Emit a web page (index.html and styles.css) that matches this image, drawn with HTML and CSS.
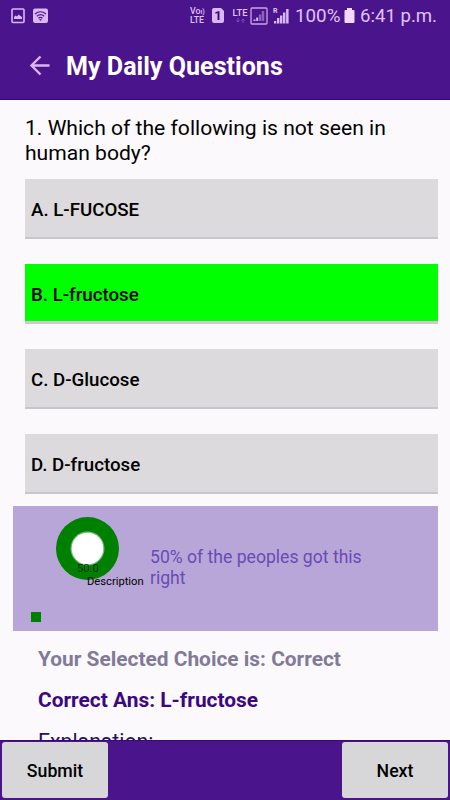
FILE: index.html
```
<!DOCTYPE html>
<html lang="en">
<head>
	<meta charset="UTF-8">
	<meta name="viewport" content="width=device-width,initial-scale=1.0">
	<title>My Daily Questions</title>
	<link rel="stylesheet" href="styles.css">
</head>
<body>
	<div class="wrap">
		<header class="header">
			<div class="status-bar">
				<svg class="icon-picture" width="14" height="16" viewBox="0 0 14 16">
					<rect x="1" y="1" width="12" height="13.5" rx="1" fill="none" stroke="#d9b8f5" stroke-width="1.6"/>
					<path d="M3 11V9l1.5-1.5L6 8.5 7.5 6.500 9.500 8 11 9v2z" fill="#d9b8f5"/>
				</svg>
				<svg class="icon-wifi" width="15" height="16" viewBox="0 0 15 16">
					<rect y="0.5" width="15" height="14.5" rx="2" fill="#d9b8f5"/>
					<path d="M2 6Q7.5 1.5 13 6M3.8 8.2Q7.5 5 11.2 8.2M5.5 10.2Q7.5 8.5 9.5 10.2" fill="none" stroke="#4a148c" stroke-width="1.2"/>
					<path d="M6 11.2h3L7.5 13z" fill="#4a148c"/>
				</svg>
				<div class="volte"><span>Vo<i>ı)</i></span><span>LTE</span></div>
				<div class="sim">1</div>
				<div class="lte">
					<span>LTE</span>
					<svg width="9" height="5" viewBox="0 0 9 5"><path d="M2 0v4M.5 2.5L2 4l1.500-1.500M7 5V1M5.500 2.500L7 1l1.500 1.500" fill="none" stroke="#8053b5"/></svg>
				</div>
				<svg class="icon-signal" width="18" height="18" viewBox="0 0 18 18">
					<rect x="1" y="1" width="16" height="16" rx="1" fill="none" stroke="#c9a5e9" stroke-width="1.3"/>
					<path d="M3.5 12.5h2V14h-2zM6.200 10.500h2V14h-2z" fill="#d9b8f5"/>
					<path d="M8.9 7.5h2.300V14H8.900zM11.700 4h2.500v10h-2.500z" fill="#8d60bd"/>
				</svg>
				<div class="roaming">
					<span>R</span>
					<svg width="15" height="16" viewBox="0 0 15 16"><path d="M0 13h2.300v2.500H0zM3 10h2.400v5.500H3zM6 7.500h2.400v8H6zM9 4.500h2.400v11H9zM12.100 1H14.600v14.500h-2.500z" fill="#d9b8f5"/></svg>
				</div>
				<span class="percent">100%</span>
				<svg class="icon-battery" width="11" height="15" viewBox="0 0 11 15"><path d="M3 0h5v2h1.500q1 0 1 1v11q0 1-1 1h-8q-1 0-1-1V3q0-1 1-1H3z" fill="#f2d9ff"/></svg>
				<span class="time">6:41 p.m.</span>
			</div>
			<div class="toolbar">
				<svg class="icon-back" width="22" height="22" viewBox="0 0 22 22">
					<path d="M20.5 10.5H2.5M11.5 1.5L2.5 10.5 11.5 19.5" fill="none" stroke="#dcb5f7" stroke-width="2.4"/>
				</svg>
				<h1 class="title">My Daily Questions</h1>
			</div>
		</header>
		<main class="content">
			<p class="question">1. Which of the following is not seen in<br>human body?</p>
			<div class="options">
				<button class="option">A. L-FUCOSE</button>
				<button class="option correct">B. L-fructose</button>
				<button class="option">C. D-Glucose</button>
				<button class="option">D. D-fructose</button>
			</div>
			<div class="stats">
				<div class="chart">
					<svg width="63" height="63" viewBox="0 0 63 63">
						<circle cx="31.5" cy="31.5" r="31.5" fill="#008000"/>
						<circle cx="31.5" cy="31.5" r="17" fill="#78b878"/>
						<circle cx="31.5" cy="31.5" r="15.8" fill="#fff"/>
					</svg>
					<span class="chart-value">50.0</span>
					<span class="chart-desc">Description</span>
					<i class="legend"></i>
				</div>
				<p class="stats-text">50% of the peoples got this<br>right</p>
			</div>
			<div class="result">
				<p class="choice">Your Selected Choice is: Correct</p>
				<p class="answer">Correct Ans: L-fructose</p>
				<p class="explanation">Explanation:</p>
			</div>
		</main>
		<footer class="footer">
			<button class="btn">Submit</button>
			<button class="btn">Next</button>
		</footer>
	</div>
</body>
</html>
```
FILE: styles.css
```
* {
	box-sizing: border-box;
}
body {
	margin: 0;
	font-family: Roboto, "Liberation Sans", sans-serif;
	background: #fcf9fd;
	color: #000;
}
p, h1 {
	margin: 0;
}
button {
	border: 0;
	font-family: inherit;
	color: #000;
}
.wrap {
	display: flex;
	flex-direction: column;
	width: 450px;
	height: 800px;
	overflow: hidden;
}
.header {
	flex: none;
	height: 100px;
	background: #4a148c;
	border-bottom: 1px solid #3c0878;
}
.status-bar {
	display: flex;
	align-items: center;
	height: 31px;
	padding-left: 11px;
	color: #e0c2f7;
	white-space: nowrap;
}
.status-bar svg {
	flex: none;
}
.icon-wifi {
	margin-left: 8px;
}
.volte {
	display: flex;
	flex-direction: column;
	flex: none;
	width: 16px;
	margin-left: 142px;
	font-size: 8.8px;
	line-height: 8px;
	font-weight: 500;
}
.volte i {
	font-style: normal;
	font-size: 7px;
}
.sim {
	flex: none;
	width: 12px;
	height: 15px;
	margin-left: 6px;
	border-radius: 2px;
	background: #d9b8f5;
	color: #3c0878;
	font-size: 13px;
	line-height: 15px;
	font-weight: 700;
	text-align: center;
	clip-path: polygon(0 0, 9px 0, 100% 3px, 100% 100%, 0 100%);
}
.lte {
	display: flex;
	flex-direction: column;
	flex: none;
	align-items: center;
	gap: 1px;
	width: 16px;
	margin-left: 8px;
	font-size: 9.4px;
	line-height: 9px;
	font-weight: 500;
}
.icon-signal {
	margin-left: 2px;
}
.roaming {
	display: flex;
	flex: none;
	margin-left: 5px;
}
.roaming span {
	width: 4px;
	margin-right: -3px;
	font-size: 7px;
	line-height: 7px;
	font-weight: 700;
}
.percent {
	flex: none;
	width: 46px;
	margin-left: 6px;
	font-size: 18.8px;
}
.icon-battery {
	margin-left: 3px;
}
.time {
	margin-left: 5px;
	font-size: 18.6px;
}
.toolbar {
	display: flex;
	align-items: center;
	height: 69px;
	padding-left: 29px;
}
.title {
	margin: 3px 0 0 15px;
	font-size: 25.1px;
	line-height: 30px;
	font-weight: 700;
	color: #fff;
}
.content {
	flex: 1;
	min-height: 0;
	overflow: hidden;
}
.question {
	padding: 15px 25px 0;
	font-size: 21.1px;
	line-height: 25px;
}
.options {
	display: flex;
	flex-direction: column;
	gap: 25px;
	padding: 14px 12px 0 25px;
}
.option {
	height: 60px;
	padding: 3px 6px 0;
	border-bottom: 2px solid #c9c6cb;
	background: #dcdadd;
	font-size: 18.7px;
	font-weight: 500;
	text-align: left;
}
.option.correct {
	padding-top: 4px;
	border-bottom: 3px solid #d3c6d2;
	background: #00ff00;
	background-clip: padding-box;
}
.stats {
	display: flex;
	height: 125px;
	margin: 12px 12px 0 13px;
	background: #b9a6d8;
}
.chart {
	position: relative;
	width: 137px;
	padding: 11px 0 0 43px;
}
/* labels drawn over the pie */
.chart-value, .chart-desc {
	position: absolute;
	font-size: 11.2px;
	line-height: 12px;
}
.chart-value {
	left: 64px;
	top: 57px;
	color: #06300a;
}
.chart-desc {
	left: 74px;
	top: 70px;
}
.legend {
	position: absolute;
	left: 18px;
	top: 106px;
	width: 10px;
	height: 10px;
	background: #008000;
}
.stats-text {
	padding-top: 41px;
	font-size: 17.6px;
	line-height: 21px;
	color: #684bb5;
}
.result {
	padding: 16px 38px 0;
	font-size: 20.9px;
	line-height: 25px;
}
.choice {
	font-weight: 700;
	color: #827b98;
}
.answer {
	margin-top: 16px;
	font-weight: 700;
	color: #3b087f;
}
.explanation {
	margin-top: 16px;
	font-size: 21.2px;
	color: #241066;
}
.footer {
	display: flex;
	flex: none;
	justify-content: space-between;
	height: 60px;
	padding: 1px 2px 2px;
	background: #4a148c;
	border-top: 1px solid #3c0878;
}
.btn {
	width: 106px;
	height: 56px;
	padding-top: 3px;
	border-radius: 3px;
	background: #d7d7d9;
	font-size: 17.7px;
	font-weight: 500;
}
```
